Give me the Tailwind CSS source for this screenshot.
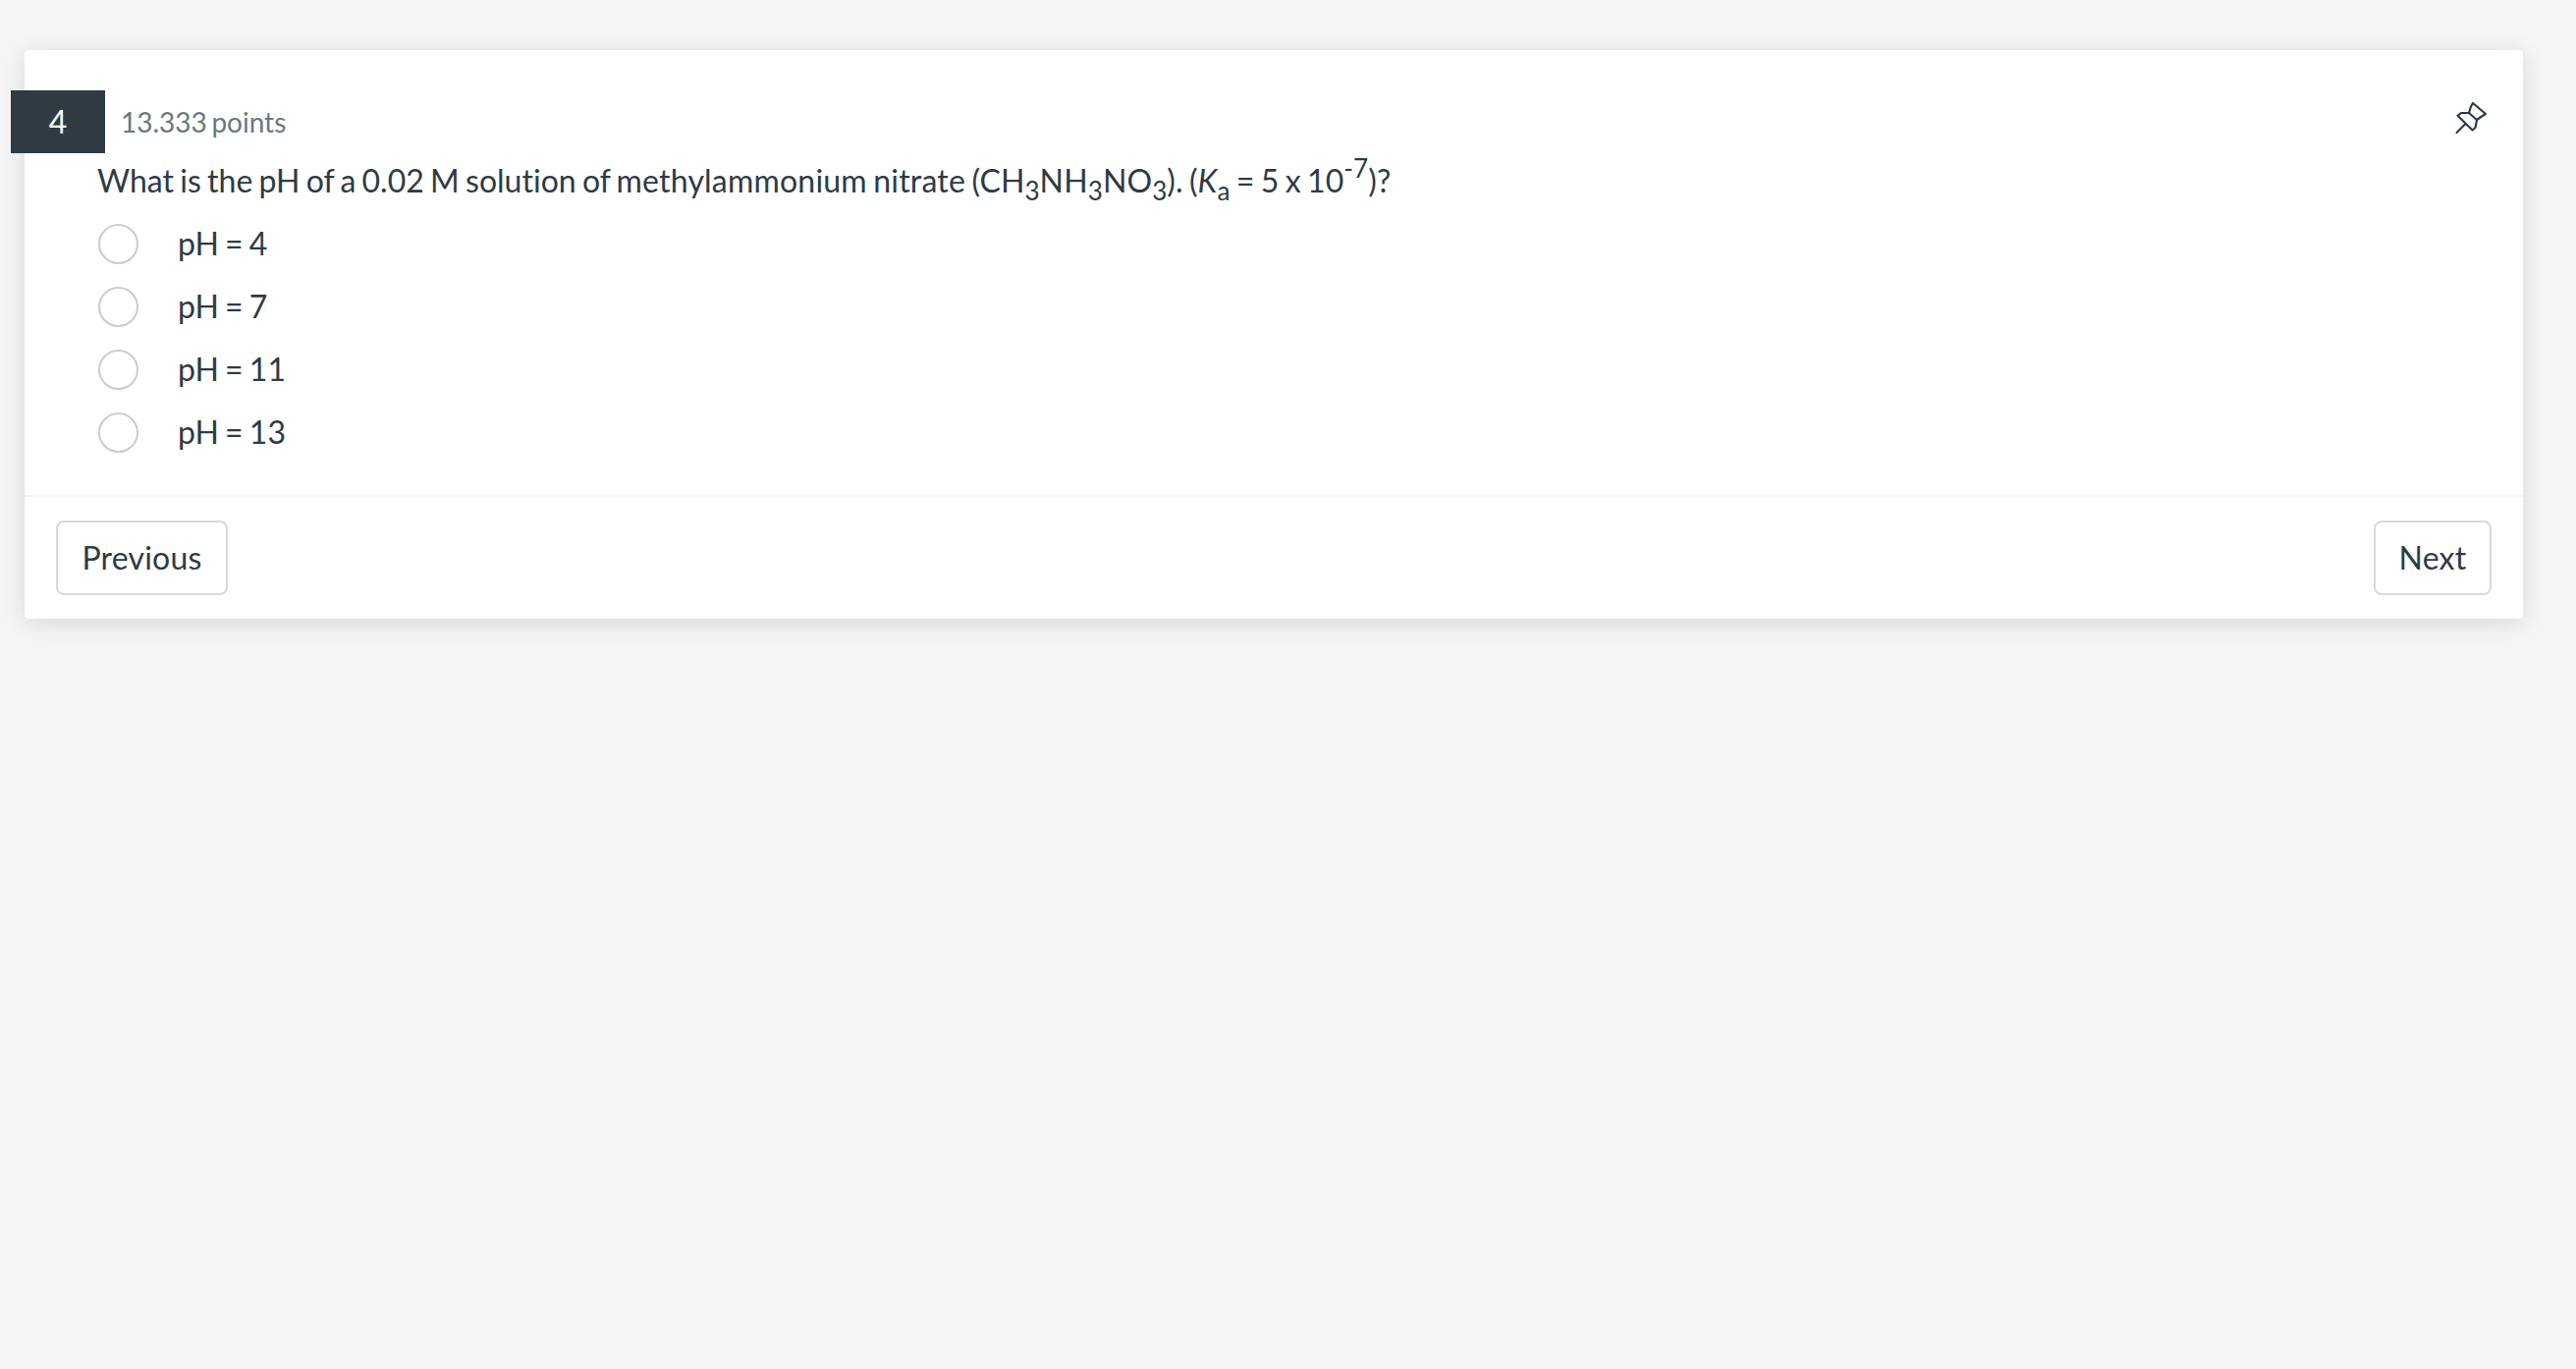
<!DOCTYPE html>
<html>
<head>
<meta charset="utf-8">
<script src="https://cdn.jsdelivr.net/npm/@tailwindcss/browser@4"></script>
</head>
<body class="bg-[#f5f5f5] h-[1394px] overflow-hidden font-['Lato',sans-serif] text-[#2d3b45]">
<div class="pl-[25px] pr-[54px] pt-[51px]">
  <div class="relative bg-white rounded-[4px] shadow-[0_4px_24px_rgba(0,0,0,0.12)] w-[2544px]">
    <div class="absolute left-[-14px] top-[41px] w-[96px] h-[64px] bg-[#2f3a43] text-white text-[32px] flex items-center justify-center">4</div>
    <svg class="absolute left-[2474px] top-[51px]" width="35" height="35" viewBox="0 0 35 35" fill="none" stroke="#2d3b45" stroke-width="2.2" stroke-linejoin="round" stroke-linecap="round">
      <path d="M2.5 33 L11 24.5"/>
      <path d="M19 3 L32 14 L28 16.5 L23 20 L21.5 28 L18.5 30.5 L3.5 15.8 L7 13 L15 13 L17 6.5 Z"/>
      <path d="M15 13 L23 20"/>
    </svg>
    <div class="pt-[41px] h-[453px]">
      <div class="h-[64px] pl-[98px] flex items-center text-[28px] [word-spacing:-2.6px] text-[#6b7780]">13.333 points</div>
      <p class="pl-[74px] h-[60px] text-[32px] leading-[56px] tracking-[0.02px] [word-spacing:-2px] whitespace-nowrap">What is the pH of a 0.02 M solution of <span class="tracking-[0.2px]">methylammonium nitrate </span><span class="tracking-[0.1px]">(CH<sub class="text-[26px] bottom-[-8px]">3</sub>NH<sub class="text-[26px] bottom-[-8px]">3</sub>NO<sub class="text-[26px] bottom-[-8px]">3</sub>). (<em>K</em><sub class="text-[26px] bottom-[-8px]">a</sub> = 5 x 10<sup class="text-[26px] top-[-15px]">-7</sup>)?</span></p>
      <ul class="pl-[75px] flex flex-col">
        <li class="h-[64px] flex items-center gap-[40px] text-[32px] [word-spacing:-2px]"><span class="w-[41px] h-[41px] rounded-full border-2 border-[#c7cdd1] bg-white shrink-0"></span>pH = 4</li>
        <li class="h-[64px] flex items-center gap-[40px] text-[32px] [word-spacing:-2px]"><span class="w-[41px] h-[41px] rounded-full border-2 border-[#c7cdd1] bg-white shrink-0"></span>pH = 7</li>
        <li class="h-[64px] flex items-center gap-[40px] text-[32px] [word-spacing:-2px]"><span class="w-[41px] h-[41px] rounded-full border-2 border-[#c7cdd1] bg-white shrink-0"></span>pH = 11</li>
        <li class="h-[64px] flex items-center gap-[40px] text-[32px] [word-spacing:-2px]"><span class="w-[41px] h-[41px] rounded-full border-2 border-[#c7cdd1] bg-white shrink-0"></span>pH = 13</li>
      </ul>
    </div>
    <div class="border-t-2 border-[#f5f5f5] h-[126px] px-[32px] flex items-center justify-between">
      <button class="h-[76px] w-[175px] rounded-[8px] border-2 border-[#d9d9d9] bg-white text-[32px] tracking-[0.2px] flex items-center justify-center">Previous</button>
      <button class="h-[76px] w-[120px] rounded-[8px] border-2 border-[#d9d9d9] bg-white text-[32px] tracking-[0.2px] flex items-center justify-center">Next</button>
    </div>
  </div>
</div>
</body>
</html>
